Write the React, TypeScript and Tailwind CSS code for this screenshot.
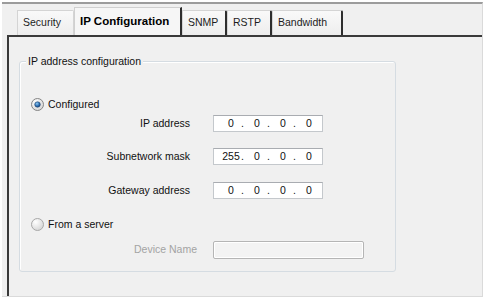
import React from "react";

const font = { fontFamily: '"Liberation Sans", Arial, sans-serif' };

function Radio({ checked }: { checked: boolean }) {
  return (
    <svg width="13" height="13" viewBox="0 0 13 13" className="shrink-0">
      <defs>
        <radialGradient id={checked ? "rg1" : "rg2"} cx="0.35" cy="0.3" r="0.8">
          <stop offset="0" stopColor="#ffffff" />
          <stop offset="1" stopColor="#d2d2d2" />
        </radialGradient>
        <radialGradient id="dot" cx="0.4" cy="0.35" r="0.7">
          <stop offset="0" stopColor="#8fc8f0" />
          <stop offset="0.6" stopColor="#2a6cb0" />
          <stop offset="1" stopColor="#1b4275" />
        </radialGradient>
      </defs>
      <circle cx="6.5" cy="6.5" r="6" fill={`url(#${checked ? "rg1" : "rg2"})`} stroke={checked ? "#858585" : "#a8a8a8"} strokeWidth="1" />
      {checked && <circle cx="6.5" cy="6.5" r="2.8" fill="url(#dot)" stroke="#1e3f66" strokeWidth="0.5" />}
    </svg>
  );
}

function IpField({ octets }: { octets: string[] }) {
  return (
    <div className="ml-[23px] flex h-[17px] w-[110px] items-center border border-[#c4c8cc] border-t-[#a9acb1] bg-white pl-[8px] text-[10.5px] text-[#111]">
      {octets.map((o, i) => (
        <React.Fragment key={i}>
          <span className="w-[18px] text-center">{o}</span>
          {i < 3 && <span className="w-[8px] pl-[1px] text-left">.</span>}
        </React.Fragment>
      ))}
    </div>
  );
}

function Tab({ label, w, active, dark }: { label: string; w: string; active?: boolean; dark?: boolean }) {
  return (
    <div
      className={
        active
          ? `flex h-[28px] items-center border-l border-t border-[#d0d0d0] border-r-2 border-r-[#2e2e2e] bg-[#f6f6f6] pl-[5px] text-[11.5px] font-bold text-black ${w}`
          : `flex h-[25px] items-center border-l border-t border-[#d4d4d4] ${dark ? "border-r-2 border-r-[#2e2e2e]" : "border-r border-r-[#d4d4d4]"} rounded-tr-[2px] bg-gradient-to-b from-[#f9f9f9] to-[#ededed] pl-[5px] text-[10.5px] text-[#1c1c1c] ${w}`
      }
    >
      {label}
    </div>
  );
}

export default function App() {
  return (
    <div className="h-[300px] w-[485px] bg-white pb-[3px] pl-[2px] pr-[2px] pt-[2px]" style={font}>
      <div className="flex h-full flex-col border-b border-r border-t-2 border-b-[#dadada] border-r-[#dadada] border-t-[#9c9c9c] bg-[#f0f0f0]">
        <div className="flex h-[31px] items-end pl-[15px]">
          <Tab label="Security" w="w-[57px]" />
          <Tab label="IP Configuration" w="w-[108px]" active />
          <Tab label="SNMP" w="w-[45px]" dark />
          <Tab label="RSTP" w="w-[45px]" dark />
          <Tab label="Bandwidth" w="w-[71px]" dark />
        </div>
        <div className="ml-[5px] flex-1 border-l-2 border-t-2 border-[#3a3a3a] bg-[#f0f0f0] pl-[10px] pt-[24px]">
          <div className="h-[211px] w-[377px] rounded-[3px] border border-[#d5dce2] shadow-[inset_1px_1px_0_#ffffff]">
            <div className="-mt-[7px] ml-[6px] w-fit bg-[#f0f0f0] px-[2px] text-[10.5px] leading-[13px] text-[#111]">
              IP address configuration
            </div>
            <div className="mt-[30px] flex items-center pl-[11px] text-[10.5px] leading-[13px] text-[#111]">
              <Radio checked />
              <span className="ml-[4px]">Configured</span>
            </div>
            <div className="mt-[4px] flex items-center text-[10.5px] text-[#111]">
              <div className="w-[170px] text-right">IP address</div>
              <IpField octets={["0", "0", "0", "0"]} />
            </div>
            <div className="mt-[16px] flex items-center text-[10.5px] text-[#111]">
              <div className="w-[170px] text-right">Subnetwork mask</div>
              <IpField octets={["255", "0", "0", "0"]} />
            </div>
            <div className="mt-[17px] flex items-center text-[10.5px] text-[#111]">
              <div className="w-[170px] text-right">Gateway address</div>
              <IpField octets={["0", "0", "0", "0"]} />
            </div>
            <div className="mt-[19px] flex items-center pl-[11px] text-[10.5px] leading-[13px] text-[#111]">
              <Radio checked={false} />
              <span className="ml-[4px]">From a server</span>
            </div>
            <div className="mt-[10px] flex items-center text-[10.5px]">
              <div className="w-[177px] text-right text-[#a3a3a3]">Device Name</div>
              <div className="ml-[16px] h-[18px] w-[151px] rounded-[2px] border border-[#b5b5b5] bg-[#f3f3f3] shadow-[inset_1px_1px_0_#ffffff,inset_-1px_-1px_0_#ffffff]" />
            </div>
          </div>
        </div>
      </div>
    </div>
  );
}
